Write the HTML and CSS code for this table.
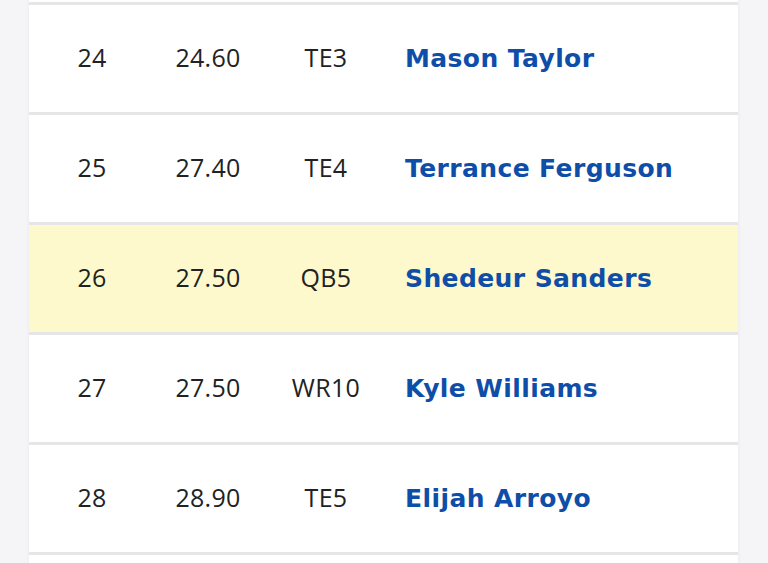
FILE: index.html
```html
<!DOCTYPE html>
<html>
<head>
<meta charset="utf-8">
<link rel="stylesheet" href="styles.css">
</head>
<body>
<div class="table">
  <div class="row"><span class="c">24</span><span class="c">24.60</span><span class="c">TE3</span><a class="name">Mason Taylor</a></div>
  <div class="row"><span class="c">25</span><span class="c">27.40</span><span class="c">TE4</span><a class="name">Terrance Ferguson</a></div>
  <div class="row hl"><span class="c">26</span><span class="c">27.50</span><span class="c">QB5</span><a class="name">Shedeur Sanders</a></div>
  <div class="row"><span class="c">27</span><span class="c">27.50</span><span class="c">WR10</span><a class="name">Kyle Williams</a></div>
  <div class="row"><span class="c">28</span><span class="c">28.90</span><span class="c">TE5</span><a class="name">Elijah Arroyo</a></div>
  <div class="row partial"></div>
</div>
</body>
</html>
```
FILE: styles.css
```css
html, body {
  margin: 0;
  padding: 0;
  background: #f5f5f7;
  height: 563px;
  overflow: hidden;
}
body {
  font-family: "Open Sans", "Liberation Sans", sans-serif;
  color: #222;
}
.table {
  margin: 0 30px 0 29px;
  width: 709px;
  padding-top: 2px;
  background: #fff;
  box-shadow: 0 0 4px rgba(0,0,0,0.06);
}
.row {
  display: grid;
  grid-template-columns: 126px 106px 130px 1fr;
  align-items: center;
  height: 107px;
  border-top: 3px solid #e6e6e9;
  background: #fff;
}
.row.partial {
  height: 8px;
}
.row.hl {
  background: #fef9cc;
}
.c {
  text-align: center;
  font-size: 25px;
  font-weight: 400;
  letter-spacing: 0.3px;
  padding-bottom: 3px;
}
.name {
  padding-left: 14px;
  font-family: "DejaVu Sans", "Open Sans", sans-serif;
  font-size: 25px;
  font-weight: 700;
  letter-spacing: 0.4px;
  color: #0e4ea8;
}
```
